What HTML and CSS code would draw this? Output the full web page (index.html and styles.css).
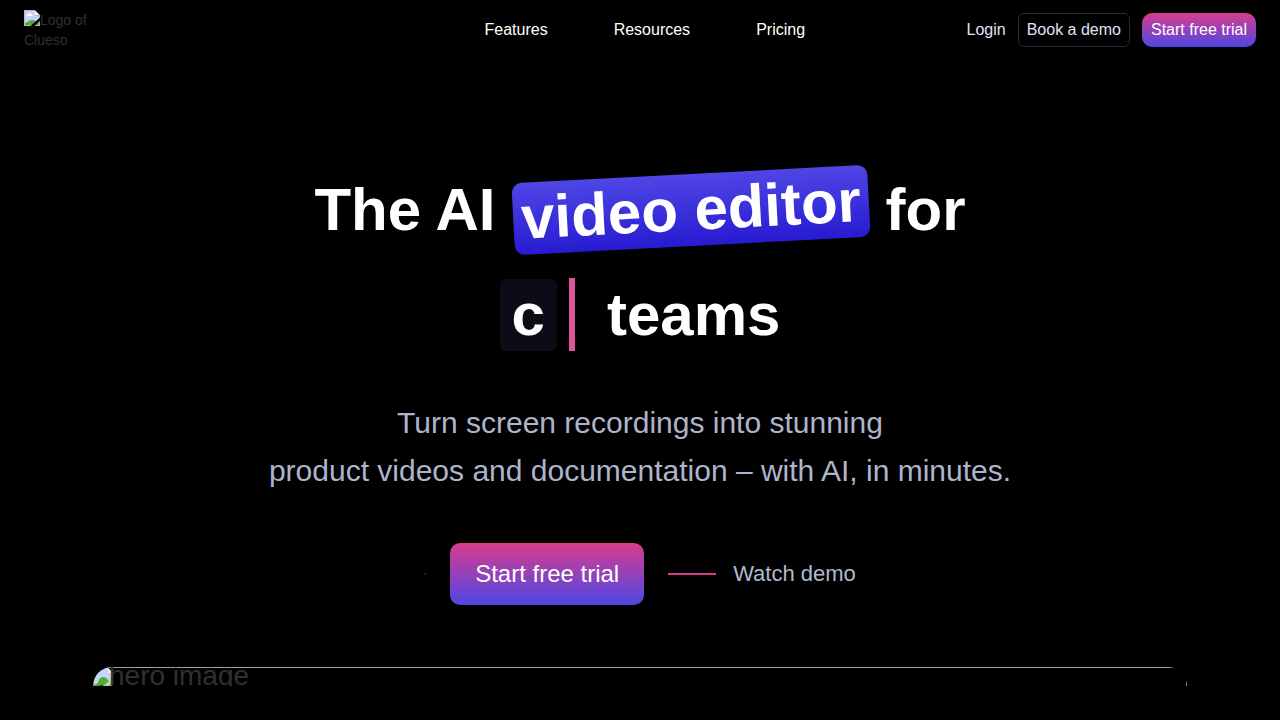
FILE: index.html
```
<!DOCTYPE html>
<html lang="en">
<head>
<meta charset="utf-8">
<meta name="viewport" content="width=device-width, initial-scale=1">
<title>Clueso</title>
<link rel="stylesheet" href="styles.css">
</head>
<body>
<header class="header">
  <div class="brand">
    <a class="logo" href="#"><svg class="missing-icon" viewBox="0 0 16 16" aria-hidden="true">
      <path d="M0 0h11l5 5v11H0z" fill="#b8b8b8"/>
      <path d="M1 1h10v5h4v9H1z" fill="#c3d6f8"/>
      <path d="M3 6a1.500 1.500 0 0 1 1.500-2 2 2 0 0 1 3.500 1 1 1 0 0 1 1 1z" fill="#fff"/>
      <path d="M1 15v-2c3-1 4-3 7-3s3 1 7 3v2z" fill="#53ad35"/>
      <path d="M11 1v4h4z" fill="#fff"/>
      <path d="M6.500 16 16 7.500V11l-5.500 5z" fill="#000"/>
    </svg>Logo of Clueso</a>
  </div>
  <nav class="nav">
    <a href="#">Features</a>
    <a href="#">Resources</a>
    <a href="#">Pricing</a>
  </nav>
  <div class="actions">
    <a class="login" href="#">Login</a>
    <button class="button button-outline" type="button">Book a demo</button>
    <button class="button button-primary" type="button">Start free trial</button>
  </div>
</header>
<main class="hero">
  <h1 class="title">
    <span class="title-row"><span>The AI</span> <span class="highlight">video editor</span> <span>for</span></span>
    <span class="title-row typed-row"><span class="typed">c</span><span class="cursor"></span><span class="teams">teams</span></span>
  </h1>
  <p class="subtitle">Turn screen recordings into stunning<br>product videos and documentation – with AI, in minutes.</p>
  <div class="cta">
    <span class="dot"></span>
    <button class="button-large" type="button">Start free trial</button>
    <a class="watch" href="#"><span class="dash"></span>Watch demo</a>
  </div>
  <div class="preview">
    <div class="preview-image"><svg class="preview-icon" viewBox="0 0 18 20" aria-hidden="true">
      <path d="M0 0h14l4 4v16H0z" fill="#c3d6f8"/>
      <path d="M14 0v5h4V4z" fill="#eee"/>
      <path d="M0 17c3-1 4-2 5-5 1-4 7-4 9 0 1 1 2 2 4 2v6H0z" fill="#53ad35"/>
      <path d="M7 20l11-10v5l-5 5z" fill="#b9d3ae"/>
      <path d="M0 19c4 0 6-2 9-2l-3 3H0z" fill="#111"/>
    </svg><span>hero image</span></div>
  </div>
</main>
</body>
</html>
```

FILE: styles.css
```
* {
  box-sizing: border-box;
}

body {
  margin: 0;
  background: #000;
  color: #fff;
  font-family: "Liberation Sans", Arial, sans-serif;
  overflow: hidden;
}

a {
  color: inherit;
  text-decoration: none;
}

.missing-icon {
  width: 16px;
  height: 16px;
  vertical-align: -1px;
}

.preview-icon {
  flex: none;
  width: 18px;
  height: 20px;
  margin-right: -3px;
}

.header {
  display: flex;
  align-items: center;
  justify-content: space-between;
  height: 60px;
  padding: 0 24px;
  font-size: 16px;
}

.brand {
  width: 299px;
}

.logo {
  display: block;
  width: 80px;
  font-size: 14px;
  line-height: 20px;
  color: #303030;
}

.nav {
  display: flex;
  gap: 66px;
}

.actions {
  display: flex;
  align-items: center;
  gap: 12px;
}

.login {
  color: #e2e2f5;
}

.button {
  height: 34px;
  padding: 0 8px;
  border: 1px solid transparent;
  font: inherit;
  color: #e2e2f5;
}

.button-outline {
  border-color: #2b2b36;
  border-radius: 6px;
  background: transparent;
}

.button-primary,
.button-large {
  background: linear-gradient(#d83d8c, #4f46e5) border-box;
  border-radius: 10px;
  color: #fff;
}

.hero {
  display: flex;
  flex-direction: column;
  align-items: center;
  padding: 97px 93px 0;
}

.title {
  margin: 0;
  font-size: 60px;
  font-weight: 700;
  line-height: 105px;
}

.title-row {
  display: flex;
  align-items: center;
  justify-content: center;
  gap: 17px;
}

.typed-row {
  gap: 0;
}

.highlight {
  padding: 0 8px;
  border-radius: 10px;
  background: linear-gradient(#4f46e5, #271bd1);
  line-height: 72px;
  transform: rotate(-3deg);
}

.typed {
  padding: 0 12px;
  border-radius: 6px;
  background: #0c0c17;
  line-height: 72px;
}

.cursor {
  width: 6px;
  height: 73px;
  margin: 0 32px 0 12px;
  background: #db5698;
}

.subtitle {
  margin: 32px 0 0;
  color: #afb4cb;
  font-size: 30px;
  line-height: 48px;
  text-align: center;
}

.cta {
  display: flex;
  align-items: center;
  gap: 24px;
  margin-top: 48px;
}

.dot {
  width: 2px;
  height: 2px;
  background: #1e1e29;
}

.button-large {
  height: 62px;
  padding: 0 25px;
  border: 0;
  font: inherit;
  font-size: 24px;
}

.watch {
  display: flex;
  align-items: center;
  gap: 17px;
  color: #afb9cf;
  font-size: 22px;
}

.dash {
  width: 48px;
  height: 2px;
  background: #d83d8c;
}

.preview {
  align-self: stretch;
  height: 19px;
  margin-top: 62px;
  overflow: hidden;
  border-radius: 20px 20px 0 0;
}

.preview-image {
  display: flex;
  align-items: flex-start;
  height: 60px;
  border: 1px solid #a0a0a0;
  color: #303030;
  font-size: 28px;
  line-height: 16px;
}
```
